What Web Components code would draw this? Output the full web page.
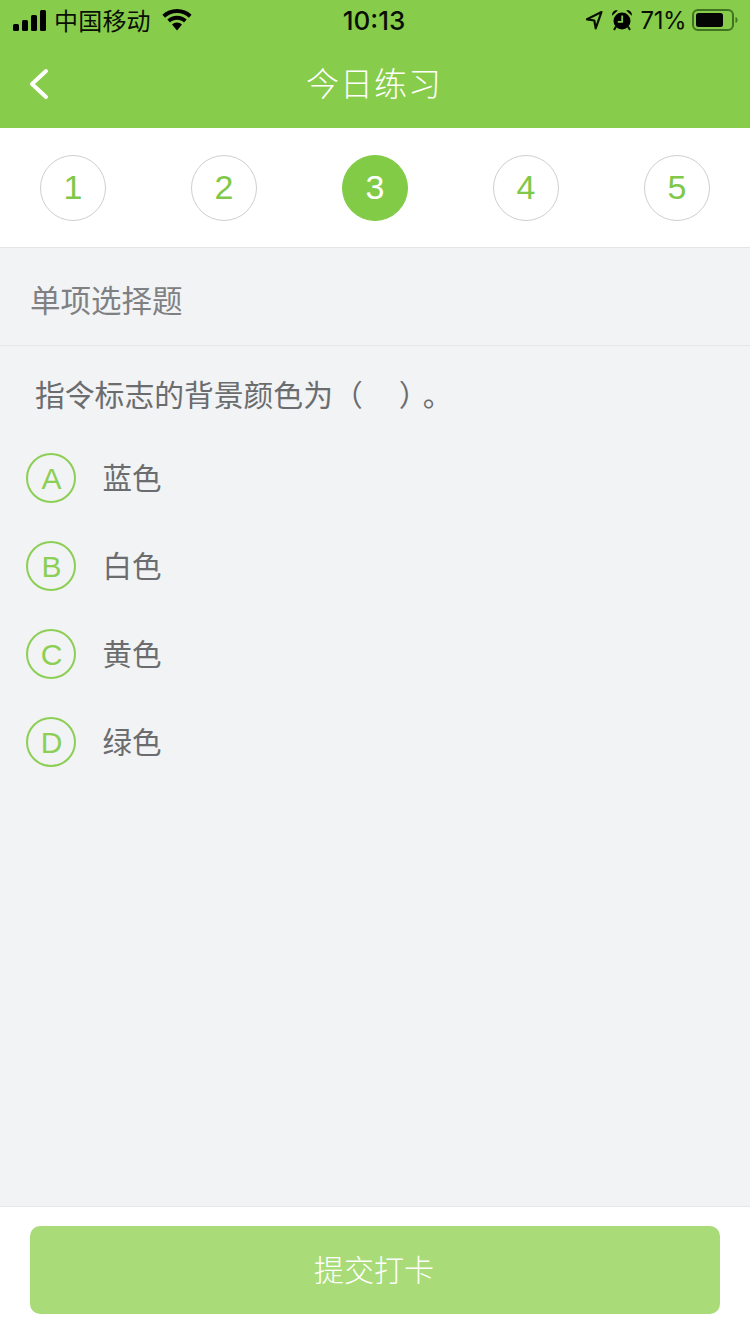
<!DOCTYPE html>
<html lang="zh">
<head>
<meta charset="utf-8">
<title>今日练习</title>
<style>
  html, body { margin: 0; padding: 0; }
  body { width: 750px; height: 1334px; overflow: hidden; font-family: "Liberation Sans", "Noto Sans CJK SC", sans-serif; }
  question-text i { padding-left: 36px; }
  question-text i + i, question-text i.small { padding-left: 9px; }
</style>
</head>
<body>
<practice-page>
  <status-bar></status-bar>
  <nav-bar>今日练习</nav-bar>
  <step-bar>
    <step-dot>1</step-dot>
    <step-dot>2</step-dot>
    <step-dot active>3</step-dot>
    <step-dot>4</step-dot>
    <step-dot>5</step-dot>
  </step-bar>
  <section-title>单项选择题</section-title>
  <question-text>指令标志的背景颜色为（<i></i>）<i class="small"></i>。</question-text>
  <option-row letter="A">蓝色</option-row>
  <option-row letter="B">白色</option-row>
  <option-row letter="C">黄色</option-row>
  <option-row letter="D">绿色</option-row>
  <submit-bar slot="footer">提交打卡</submit-bar>
</practice-page>

<script>
// page frame - content on top, submit bar pinned to the bottom
class PracticePage extends HTMLElement {
  constructor() {
    super();
    this.attachShadow({ mode: "open" }).innerHTML = `
      <style>
        :host { display: flex; flex-direction: column; height: 1334px; background: #f2f3f5; }
        main { flex: 1; display: block; }
      </style>
      <main><slot></slot></main>
      <slot name="footer"></slot>`;
  }
}

class StatusBar extends HTMLElement {
  constructor() {
    super();
    this.attachShadow({ mode: "open" }).innerHTML = `
      <style>
        :host { display: grid; grid-template-columns: 1fr auto 1fr; align-items: center; height: 40px; padding: 0 12px 0 13px; background: #87cd4b; color: #0a0f05; font-family: "Inter", "Liberation Sans", "Noto Sans CJK SC", sans-serif; }
        .left, .right { display: flex; align-items: center; }
        .right { justify-content: flex-end; }
        .carrier { font: 24px "Noto Sans CJK SC", sans-serif; margin-left: 8px; line-height: 40px; letter-spacing: 0.2px; }
        .wifi { margin-left: 11px; }
        .time { font-size: 26px; font-weight: 500; margin-left: -3px; }
        .pct { font-size: 24px; font-weight: 400; margin: 0 6px 0 8px; letter-spacing: -0.5px; }
        svg { display: block; }
        .alarm { margin-left: 8px; }
      </style>
      <div class="left">
        <svg width="33" height="21" viewBox="0 0 33 21"><rect x="0" y="14" width="6" height="7" rx="1.5"/><rect x="9" y="10" width="6" height="11" rx="1.5"/><rect x="18" y="5" width="6" height="16" rx="1.5"/><rect x="27" y="0" width="6" height="21" rx="1.5"/></svg>
        <span class="carrier">中国移动</span>
        <svg class="wifi" width="30" height="22" viewBox="0 0 30 22"><path d="M15 0C9.300 0 4.200 2.200.4 5.800l2.700 2.900C6.200 5.800 10.400 4 15 4s8.800 1.800 11.900 4.700l2.700-2.900C25.800 2.200 20.700 0 15 0z"/><path d="M15 6.800c-3.800 0-7.200 1.500-9.700 3.800L8 13.500c1.800-1.700 4.300-2.700 7-2.700s5.200 1 7 2.700l2.700-2.900C22.200 8.300 18.800 6.800 15 6.800z"/><path d="M15 13.600c-2 0-3.700.7-5 2l5 5.900 5-5.900c-1.300-1.300-3-2-5-2z"/></svg>
      </div>
      <div class="time">10:13</div>
      <div class="right">
        <svg width="18" height="20" viewBox="0 0 18 20" fill="none" stroke="#0a0f05" stroke-width="2.200" stroke-linejoin="round"><path d="M16.500 2 2 9.300l7.300 1.200 1.400 7.800z"/></svg>
        <svg class="alarm" width="22" height="22" viewBox="0 0 22 22"><circle cx="11" cy="12" r="8.500"/><path d="M1.200 6.800C.6 3.200 3.400.4 6.800 1.400zM20.800 6.800C21.400 3.200 18.600.4 15.200 1.400z"/><path d="M5 17.500l-2 3.500M17 17.500l2 3.500" stroke="#0a0f05" stroke-width="2"/><path d="M11.200 6.500V12.800H6.800" fill="none" stroke="#87cd4b" stroke-width="1.800"/></svg>
        <span class="pct">71%</span>
        <svg width="46" height="22" viewBox="0 0 46 22"><rect x="1" y="1" width="40" height="20" rx="5" fill="none" stroke="#3f7322" stroke-width="2"/><rect x="4" y="4" width="27" height="14" rx="2.500" fill="#050505"/><path d="M43.500 8c1.500.4 2 1.600 2 3s-.5 2.600-2 3z" fill="#3f7322"/></svg>
      </div>`;
  }
}

class NavBar extends HTMLElement {
  constructor() {
    super();
    this.attachShadow({ mode: "open" }).innerHTML = `
      <style>
        :host { display: flex; align-items: center; justify-content: center; position: relative; height: 88px; background: #87cd4b; color: #fff; font: 300 33px "Noto Sans CJK SC", sans-serif; }
        .title { position: relative; top: -2px; left: -1px; letter-spacing: 1px; }
        svg { position: absolute; left: 28px; top: 28px; }
      </style>
      <svg width="22" height="32" viewBox="0 0 22 32" fill="none" stroke="#fff" stroke-width="4" stroke-linecap="round" stroke-linejoin="round"><path d="M18 3 4 16l14 13"/></svg>
      <span class="title"><slot></slot></span>`;
  }
}

class StepBar extends HTMLElement {
  constructor() {
    super();
    this.attachShadow({ mode: "open" }).innerHTML = `
      <style>
        :host { display: flex; justify-content: space-between; align-items: center; height: 119px; padding: 0 40px; background: #fff; border-bottom: 1px solid #e4e5e6; box-sizing: content-box; }
      </style>
      <slot></slot>`;
  }
}

class StepDot extends HTMLElement {
  constructor() {
    super();
    this.attachShadow({ mode: "open" }).innerHTML = `
      <style>
        :host { display: flex; align-items: center; justify-content: center; box-sizing: border-box; width: 66px; height: 66px; border-radius: 50%; border: 1px solid #cfcfcf; color: #80c849; font: 34px "Liberation Sans", sans-serif; }
        :host([active]) { background: #82cb47; border-color: #82cb47; color: #fff; }
      </style>
      <slot></slot>`;
  }
}

class SectionTitle extends HTMLElement {
  constructor() {
    super();
    this.attachShadow({ mode: "open" }).innerHTML = `
      <style>
        :host { display: flex; align-items: center; height: 97px; padding-left: 30px; border-bottom: 1px solid #e6e7e9; color: #7f8082; font: 30.5px "Noto Sans CJK SC", sans-serif; }
        span { position: relative; top: 2px; }
      </style>
      <span><slot></slot></span>`;
  }
}

class QuestionText extends HTMLElement {
  constructor() {
    super();
    this.attachShadow({ mode: "open" }).innerHTML = `
      <style>
        :host { display: flex; align-items: center; height: 88px; padding-left: 35px; color: #6b6c6e; font: 29.8px "Noto Sans CJK SC", sans-serif; white-space: pre; }
        span { position: relative; top: 3px; }
      </style>
      <span><slot></slot></span>`;
  }
}

class OptionRow extends HTMLElement {
  constructor() {
    super();
    this.attachShadow({ mode: "open" }).innerHTML = `
      <style>
        :host { display: flex; align-items: center; height: 88px; padding-left: 26px; color: #6b6c6e; font: 29.5px "Noto Sans CJK SC", sans-serif; }
        .ball { display: flex; align-items: center; justify-content: center; box-sizing: border-box; width: 50px; height: 50px; padding: 2px 0 0 1px; border: 2px solid #8ccf54; border-radius: 50%; color: #8ccf54; font: 30px "Liberation Sans", sans-serif; margin-right: 27px; }
        .text { position: relative; top: -2px; left: -0.5px; }
      </style>
      <div class="ball"></div>
      <span class="text"><slot></slot></span>`;
  }
  connectedCallback() {
    this.shadowRoot.querySelector(".ball").textContent = this.getAttribute("letter");
  }
}

class SubmitBar extends HTMLElement {
  constructor() {
    super();
    this.attachShadow({ mode: "open" }).innerHTML = `
      <style>
        :host { display: block; box-sizing: border-box; height: 128px; padding: 19px 30px 20px; background: #fff; border-top: 1px solid #e6e7e9; }
        .btn { display: flex; align-items: center; justify-content: center; height: 88px; border-radius: 10px; background: #a9dc78; color: #fff; font: 300 30px "Noto Sans CJK SC", sans-serif; }
        span { position: relative; top: -2px; left: -1px; }
      </style>
      <div class="btn"><span><slot></slot></span></div>`;
  }
}

customElements.define("practice-page", PracticePage);
customElements.define("status-bar", StatusBar);
customElements.define("nav-bar", NavBar);
customElements.define("step-bar", StepBar);
customElements.define("step-dot", StepDot);
customElements.define("section-title", SectionTitle);
customElements.define("question-text", QuestionText);
customElements.define("option-row", OptionRow);
customElements.define("submit-bar", SubmitBar);
</script>
</body>
</html>
